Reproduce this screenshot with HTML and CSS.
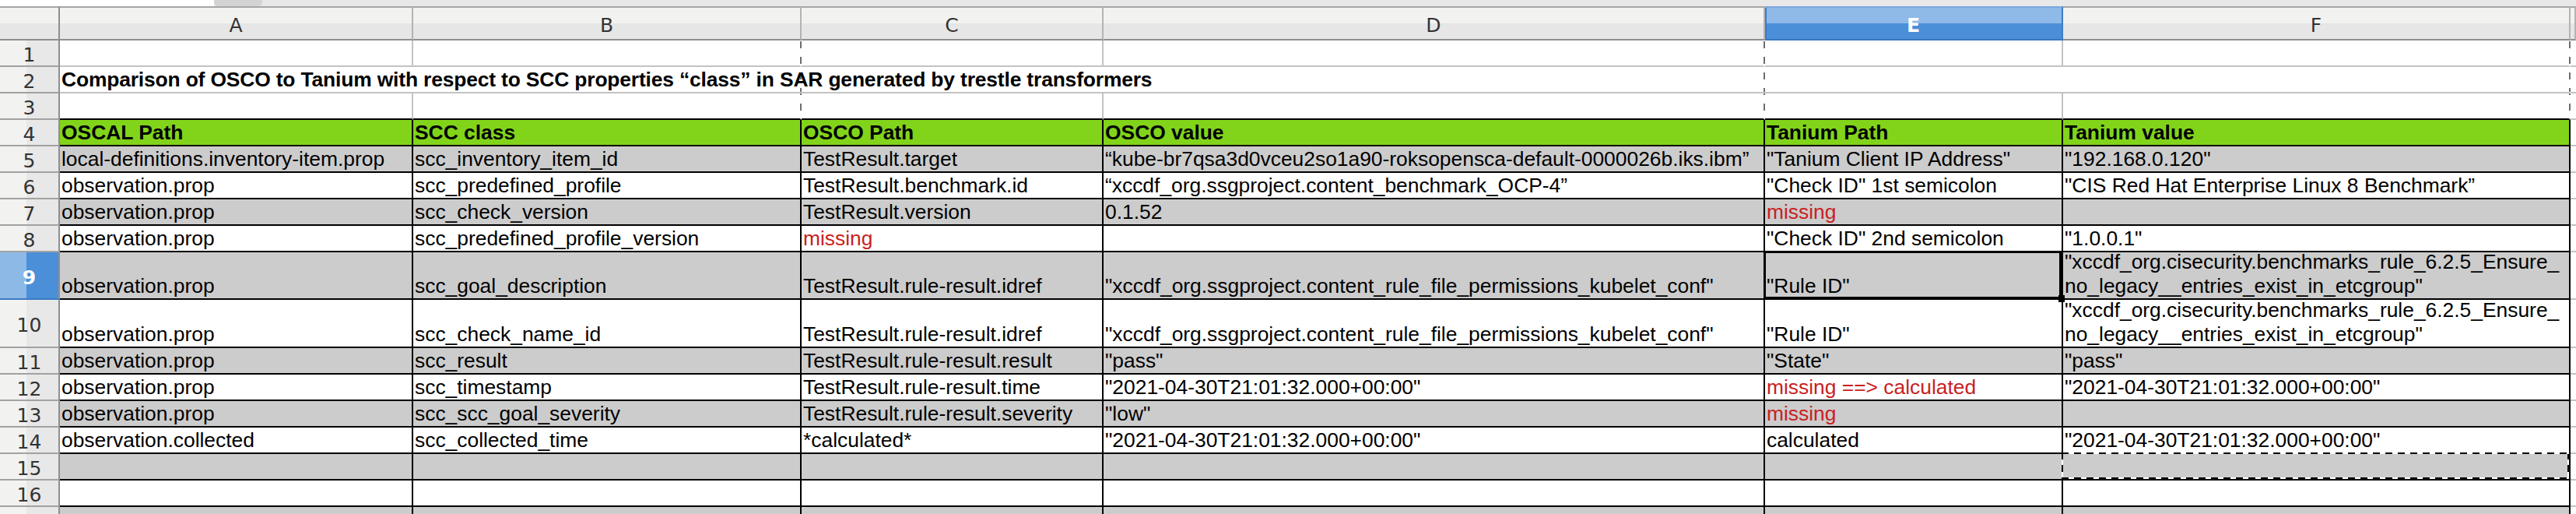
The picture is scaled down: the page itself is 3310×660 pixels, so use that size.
FILE: index.html
```html
<!DOCTYPE html>
<html lang="en">

<head>
  <meta charset="UTF-8" />
  <title>OSCO to Tanium comparison</title>
  <link rel="stylesheet" href="styles.css">
</head>

<body>
  <div class="topbar">
    <div class="namebox"></div>
    <div class="tab"></div>
  </div>

  <div class="sheet">
    <!-- column headers -->
    <div class="corner"></div>
    <div class="colhead">A</div>
    <div class="colhead">B</div>
    <div class="colhead">C</div>
    <div class="colhead">D</div>
    <div class="colhead sel">E</div>
    <div class="colhead">F</div>
    <div class="colhead"></div>

    <!-- row 1 -->
    <div class="rowhead">1</div>
    <div class="cell"></div>
    <div class="cell pb pb1"></div>
    <div class="cell"></div>
    <div class="cell pb pb1"></div>
    <div class="cell"></div>
    <div class="cell pb pb1"></div>
    <div class="cell last"></div>

    <!-- row 2 -->
    <div class="rowhead">2</div>
    <div class="cell title">Comparison of OSCO to Tanium with respect to SCC properties “class” in SAR generated by trestle transformers</div>
    <div class="cell last"></div>

    <!-- row 3 -->
    <div class="rowhead">3</div>
    <div class="cell edge"></div>
    <div class="cell edge pb pb3"></div>
    <div class="cell edge"></div>
    <div class="cell edge pb pb3"></div>
    <div class="cell edge"></div>
    <div class="cell edge pb pb3"></div>
    <div class="cell last"></div>

    <!-- row 4 -->
    <div class="rowhead">4</div>
    <div class="cell d hd">OSCAL Path</div>
    <div class="cell d hd">SCC class</div>
    <div class="cell d hd">OSCO Path</div>
    <div class="cell d hd">OSCO value</div>
    <div class="cell d hd">Tanium Path</div>
    <div class="cell d hd">Tanium value</div>
    <div class="cell last"></div>

    <!-- row 5 -->
    <div class="rowhead">5</div>
    <div class="cell d shade">local-definitions.inventory-item.prop</div>
    <div class="cell d shade">scc_inventory_item_id</div>
    <div class="cell d shade">TestResult.target</div>
    <div class="cell d shade">“kube-br7qsa3d0vceu2so1a90-roksopensca-default-0000026b.iks.ibm”</div>
    <div class="cell d shade">"Tanium Client IP Address"</div>
    <div class="cell d shade">"192.168.0.120"</div>
    <div class="cell last"></div>

    <!-- row 6 -->
    <div class="rowhead">6</div>
    <div class="cell d">observation.prop</div>
    <div class="cell d">scc_predefined_profile</div>
    <div class="cell d">TestResult.benchmark.id</div>
    <div class="cell d">“xccdf_org.ssgproject.content_benchmark_OCP-4”</div>
    <div class="cell d">"Check ID" 1st semicolon</div>
    <div class="cell d">"CIS Red Hat Enterprise Linux 8 Benchmark”</div>
    <div class="cell last"></div>

    <!-- row 7 -->
    <div class="rowhead">7</div>
    <div class="cell d shade">observation.prop</div>
    <div class="cell d shade">scc_check_version</div>
    <div class="cell d shade">TestResult.version</div>
    <div class="cell d shade">0.1.52</div>
    <div class="cell d shade miss">missing</div>
    <div class="cell d shade"></div>
    <div class="cell last"></div>

    <!-- row 8 -->
    <div class="rowhead">8</div>
    <div class="cell d">observation.prop</div>
    <div class="cell d">scc_predefined_profile_version</div>
    <div class="cell d miss">missing</div>
    <div class="cell d"></div>
    <div class="cell d">"Check ID" 2nd semicolon</div>
    <div class="cell d">"1.0.0.1"</div>
    <div class="cell last"></div>

    <!-- row 9 -->
    <div class="rowhead sel">9</div>
    <div class="cell d shade">observation.prop</div>
    <div class="cell d shade">scc_goal_description</div>
    <div class="cell d shade">TestResult.rule-result.idref</div>
    <div class="cell d shade">"xccdf_org.ssgproject.content_rule_file_permissions_kubelet_conf"</div>
    <div class="cell d shade cursor">"Rule ID"</div>
    <div class="cell d shade">"xccdf_org.cisecurity.benchmarks_rule_6.2.5_Ensure_<br>no_legacy__entries_exist_in_etcgroup"</div>
    <div class="cell last"></div>

    <!-- row 10 -->
    <div class="rowhead">10</div>
    <div class="cell d">observation.prop</div>
    <div class="cell d">scc_check_name_id</div>
    <div class="cell d">TestResult.rule-result.idref</div>
    <div class="cell d">"xccdf_org.ssgproject.content_rule_file_permissions_kubelet_conf"</div>
    <div class="cell d">"Rule ID"</div>
    <div class="cell d">"xccdf_org.cisecurity.benchmarks_rule_6.2.5_Ensure_<br>no_legacy__entries_exist_in_etcgroup"</div>
    <div class="cell last"></div>

    <!-- row 11 -->
    <div class="rowhead">11</div>
    <div class="cell d shade">observation.prop</div>
    <div class="cell d shade">scc_result</div>
    <div class="cell d shade">TestResult.rule-result.result</div>
    <div class="cell d shade">"pass"</div>
    <div class="cell d shade">"State"</div>
    <div class="cell d shade">"pass"</div>
    <div class="cell last"></div>

    <!-- row 12 -->
    <div class="rowhead">12</div>
    <div class="cell d">observation.prop</div>
    <div class="cell d">scc_timestamp</div>
    <div class="cell d">TestResult.rule-result.time</div>
    <div class="cell d">"2021-04-30T21:01:32.000+00:00"</div>
    <div class="cell d miss">missing ==&gt; calculated</div>
    <div class="cell d">"2021-04-30T21:01:32.000+00:00"</div>
    <div class="cell last"></div>

    <!-- row 13 -->
    <div class="rowhead">13</div>
    <div class="cell d shade">observation.prop</div>
    <div class="cell d shade">scc_scc_goal_severity</div>
    <div class="cell d shade">TestResult.rule-result.severity</div>
    <div class="cell d shade">"low"</div>
    <div class="cell d shade miss">missing</div>
    <div class="cell d shade"></div>
    <div class="cell last"></div>

    <!-- row 14 -->
    <div class="rowhead">14</div>
    <div class="cell d">observation.collected</div>
    <div class="cell d">scc_collected_time</div>
    <div class="cell d">*calculated*</div>
    <div class="cell d">"2021-04-30T21:01:32.000+00:00"</div>
    <div class="cell d">calculated</div>
    <div class="cell d">"2021-04-30T21:01:32.000+00:00"</div>
    <div class="cell last"></div>

    <!-- row 15 -->
    <div class="rowhead">15</div>
    <div class="cell d shade"></div>
    <div class="cell d shade"></div>
    <div class="cell d shade"></div>
    <div class="cell d shade"></div>
    <div class="cell d shade"></div>
    <div class="cell d shade marquee"></div>
    <div class="cell last"></div>

    <!-- row 16 -->
    <div class="rowhead">16</div>
    <div class="cell d"></div>
    <div class="cell d"></div>
    <div class="cell d"></div>
    <div class="cell d"></div>
    <div class="cell d"></div>
    <div class="cell d"></div>
    <div class="cell last"></div>

    <!-- row 17 -->
    <div class="rowhead">17</div>
    <div class="cell d shade"></div>
    <div class="cell d shade"></div>
    <div class="cell d shade"></div>
    <div class="cell d shade"></div>
    <div class="cell d shade"></div>
    <div class="cell d shade"></div>
    <div class="cell last"></div>
  </div>
</body>

</html>
```

FILE: styles.css
```css
body {
  margin: 0;
  padding: 0;
  overflow: hidden;
  background-color: #fff;
  font-family: 'Liberation Sans', Arial, sans-serif;
}

/* strip left over from the formula bar */
.topbar {
  display: flex;
  height: 8px;
  background-color: #e8e8e8;
}

.topbar .namebox {
  width: 275px;
  background-color: #fff;
}

.topbar .tab {
  width: 62px;
  background-color: #d3d3d3;
  border-radius: 0 0 6px 6px;
}

.sheet {
  display: grid;
  grid-template-columns: 77px 454px 499px 388px 850px 383px 652px 1fr;
  grid-template-rows: 44px repeat(8, 34px) 61px 62px repeat(7, 34px);
}

.sheet > div {
  box-sizing: border-box;
  min-width: 0;
}

/* headers */
.corner,
.colhead {
  background: linear-gradient(#f2f2f1 50%, #e6e6e6 50%);
  border-top: 2px solid #a6a6a6;
  border-bottom: 2px solid #8e8e8e;
}

.corner {
  border-right: 2px solid #8e8e8e;
}

.colhead {
  display: flex;
  align-items: center;
  justify-content: center;
  padding-top: 4px;
  border-right: 2px solid #b4b4b4;
  font-family: 'DejaVu Sans', sans-serif;
  font-size: 25px;
  color: #333;
}

.colhead.sel {
  background: linear-gradient(#8fb9e8 50%, #4a8fd8 50%);
  border-top-color: #7aa9df;
  border-bottom-color: #3a78c2;
  border-right-color: #3d7cc4;
  box-shadow: inset 2px 0 0 #3d7cc4;
  color: #fff;
  font-weight: bold;
}

.rowhead {
  display: flex;
  align-items: center;
  justify-content: center;
  padding-top: 5px;
  background: linear-gradient(90deg, #f2f2f1 45%, #e8e8e8 45%);
  border-right: 2px solid #8e8e8e;
  border-bottom: 2px solid #a2a2a2;
  font-family: 'DejaVu Sans', sans-serif;
  font-size: 25px;
  color: #333;
}

.rowhead.sel {
  background: linear-gradient(90deg, #8db9e7 45%, #4a8fd8 45%);
  border-bottom-color: #3a78c2;
  color: #fff;
  font-weight: bold;
}

/* cells */
.cell {
  display: flex;
  align-items: flex-end;
  padding: 0 2px;
  white-space: nowrap;
  font-size: 26.4px;
  color: #000;
  border-right: 2px solid #c3c3c3;
  border-bottom: 2px solid #c3c3c3;
}

.cell.last {
  border-right: none;
}

.title {
  grid-column: span 6;
  font-weight: bold;
  letter-spacing: -0.15px;
  border-right-color: transparent;
  background-image:
    repeating-linear-gradient(#6e6e6e 0 9px, transparent 9px 20px),
    repeating-linear-gradient(#6e6e6e 0 9px, transparent 9px 20px),
    repeating-linear-gradient(#6e6e6e 0 9px, transparent 9px 20px);
  background-size: 2px 20px;
  background-repeat: repeat-y;
  background-origin: border-box;
  background-clip: border-box;
  background-position: 951px 7px, 2189px 7px, right 7px;
}

/* page break marks */
.pb {
  border-right-color: transparent;
  background-image: repeating-linear-gradient(#6e6e6e 0 9px, transparent 9px 20px);
  background-size: 2px 20px;
  background-repeat: repeat-y;
  background-origin: border-box;
}

.pb1 {
  background-position: right 1px;
}

.pb3 {
  background-position: right 13px;
}

.edge {
  border-bottom-color: #000;
}

.d {
  border-right-color: #000;
  border-bottom-color: #000;
}

.shade {
  background-color: #cccccc;
}

.hd {
  background-color: #81d41a;
  font-weight: bold;
}

.miss {
  color: #c9211e;
}

/* selected cell E9 */
.cursor {
  position: relative;
  z-index: 2;
}

.cursor::after {
  content: '';
  position: absolute;
  left: -2px;
  top: -2px;
  right: 0;
  bottom: -1px;
  border: 3px solid #000;
}

.cursor::before {
  content: '';
  position: absolute;
  right: -4px;
  bottom: -5px;
  width: 8px;
  height: 9px;
  background-color: #000;
  z-index: 1;
}

/* copy marquee on F15 */
.marquee {
  position: relative;
}

.marquee::after {
  content: '';
  position: absolute;
  left: -2px;
  top: -2px;
  right: 0;
  bottom: 0;
  background:
    repeating-linear-gradient(90deg, #000 0 9px, #fff 9px 16px) left top / 100% 2px no-repeat,
    repeating-linear-gradient(90deg, #000 0 9px, #fff 9px 16px) left bottom / 100% 2px no-repeat,
    repeating-linear-gradient(#000 0 9px, #fff 9px 16px) left top / 2px 100% no-repeat,
    repeating-linear-gradient(#000 0 9px, #fff 9px 16px) right top / 2px 100% no-repeat;
}
```
